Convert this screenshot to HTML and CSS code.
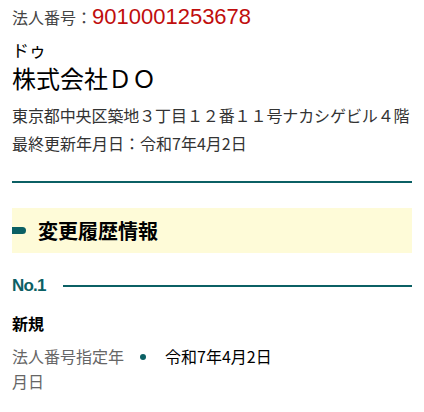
FILE: index.html
```html
<!DOCTYPE html>
<html lang="ja">
<head>
    <meta charset="UTF-8">
    <title>株式会社ＤＯ</title>
    <link rel="stylesheet" href="styles.css">
</head>
<body>
    <div class="corp">
        <div class="corp-number">
            <span class="corp-number-label">法人番号：</span><span class="corp-number-value">9010001253678</span>
        </div>
        <div class="corp-kana">ドゥ</div>
        <h1 class="corp-name">株式会社ＤＯ</h1>
        <p class="corp-address">東京都中央区築地３丁目１２番１１号ナカシゲビル４階</p>
        <p class="corp-updated">最終更新年月日：令和7年4月2日</p>
    </div>

    <h2 class="section-title">変更履歴情報</h2>

    <div class="history">
        <div class="history-no">No.1</div>
        <div class="history-type">新規</div>
        <dl class="history-row">
            <dt>法人番号指定年月日</dt>
            <dd>令和7年4月2日</dd>
        </dl>
    </div>
</body>
</html>
```

FILE: styles.css
```css
body {
    margin: 0;
    padding: 0 12px;
    font-family: "Noto Sans CJK JP", "Noto Sans", sans-serif;
    color: #000;
    background: #fff;
}

.corp {
    padding-top: 4px;
    padding-bottom: 24px;
    border-bottom: 2px solid #0b6064;
}

.corp-number {
    display: flex;
    align-items: baseline;
    height: 30px;
}

.corp-number-label {
    font-size: 16px;
    color: #444;
}

.corp-number-value {
    font-family: "Liberation Sans", Arial, sans-serif;
    font-size: 22px;
    color: #c00d0d;
}

.corp-kana {
    font-size: 17px;
    line-height: 24px;
    margin-top: 4px;
}

.corp-name {
    font-size: 24px;
    font-weight: normal;
    line-height: 30px;
    margin: 1px 0 0;
}

.corp-address,
.corp-updated {
    font-size: 16px;
    color: #333;
    line-height: 28px;
    margin: 0;
}

.corp-address {
    margin-top: 8px;
    letter-spacing: -0.1px;
    white-space: nowrap;
}

.section-title {
    display: flex;
    align-items: center;
    gap: 12px;
    margin: 25px 0 0;
    height: 45px;
    background: #fefbd8;
    font-size: 20px;
    font-weight: bold;
}

.section-title::before {
    content: "";
    width: 14px;
    height: 7px;
    border-radius: 0 4px 4px 0;
    background: #0b6064;
}

.history {
    padding-top: 20px;
}

.history-no {
    display: flex;
    align-items: center;
    gap: 17px;
    font-family: "Liberation Sans", Arial, sans-serif;
    font-size: 17px;
    font-weight: bold;
    letter-spacing: -0.8px;
    color: #0b6064;
    height: 26px;
}

.history-no::after {
    content: "";
    flex: 1;
    height: 2px;
    background: #0b6064;
}

.history-type {
    font-size: 16px;
    font-weight: bold;
    margin-top: 12px;
    line-height: 24px;
}

.history-row {
    display: flex;
    margin: 9px 0 0;
    font-size: 16px;
    line-height: 25px;
}

.history-row dt {
    width: 118px;
    color: #666;
}

.history-row dd {
    position: relative;
    margin: 0;
    padding-left: 35px;
}

.history-row dd::before {
    content: "";
    position: absolute;
    left: 10px;
    top: 10px;
    width: 6px;
    height: 6px;
    border-radius: 50%;
    background: #0b6064;
}
```
